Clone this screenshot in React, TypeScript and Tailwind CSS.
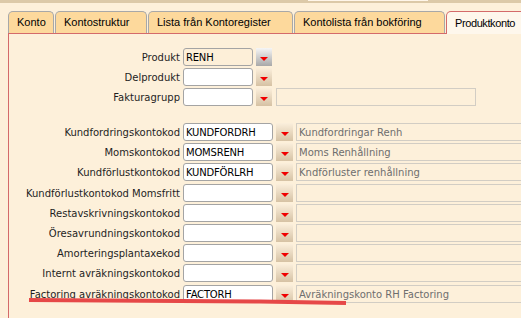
type Row = {
  label: string;
  value?: string;
  desc?: string;
  hasDesc?: boolean;
  extraTop?: boolean;
};

const topRows: Row[] = [
  { label: "Produkt", value: "RENH" },
  { label: "Delprodukt" },
  { label: "Fakturagrupp", hasDesc: true },
];

const kontoRows: Row[] = [
  { label: "Kundfordringskontokod", value: "KUNDFORDRH", desc: "Kundfordringar Renh" },
  { label: "Momskontokod", value: "MOMSRENH", desc: "Moms Renhållning" },
  { label: "Kundförlustkontokod", value: "KUNDFÖRLRH", desc: "Kndförluster renhållning" },
  { label: "Kundförlustkontokod Momsfritt", extraTop: true },
  { label: "Restavskrivningskontokod" },
  { label: "Öresavrundningskontokod" },
  { label: "Amorteringsplantaxekod" },
  { label: "Internt avräkningskontokod" },
  { label: "Factoring avräkningskontokod", value: "FACTORH", desc: "Avräkningskonto RH Factoring", extraTop: true },
];

const tabs = [
  { name: "Konto", w: "w-[46px]" },
  { name: "Kontostruktur", w: "w-[92px]" },
  { name: "Lista från Kontoregister", w: "w-[145px]" },
  { name: "Kontolista från bokföring", w: "w-[151px]" },
];

function DropButton({ gray, wide }: { gray?: boolean; wide?: boolean }) {
  return (
    <div
      className={`${wide ? "w-[17px]" : "w-[16px]"} h-[18px] flex items-center justify-center pt-[3px] ${
        gray
          ? "bg-gradient-to-b from-[#f6f6f6] to-[#a9a9a9]"
          : "bg-gradient-to-b from-[#fbefdc] to-[#d6c2a4]"
      }`}
    >
      <svg width="8" height="4" viewBox="0 0 8 4">
        <polygon points="0,0 8,0 4,4" fill="#f00000" />
      </svg>
    </div>
  );
}

function FieldInput({ value, width, filled }: { value?: string; width: string; filled?: boolean }) {
  return (
    <div
      className={`${width} h-[18px] rounded-[3px] border border-[#a4a4a4] px-[2px] flex items-center text-[10px] text-black tracking-[-0.2px] ${
        filled ? "bg-[#fdefd8]" : "bg-white"
      }`}
    >
      {value}
    </div>
  );
}

export default function App() {
  return (
    <div className="w-[521px] h-[318px] overflow-hidden relative bg-[#fdf0da] font-['DejaVu_Sans',sans-serif]">
      {/* top strip */}
      <div className="h-[3px] bg-[#dcc9a8] flex">
        <div className="ml-[308px] w-[120px] h-[1px] bg-[#fff6ea]" />
      </div>

      {/* tabs */}
      <div className="mt-[8px] pl-[8px] flex items-end h-[22px] font-['Liberation_Sans',sans-serif] text-[11px] text-black">
        {tabs.map((t, i) => (
          <div
            key={t.name}
            className={`${t.w} ${i > 0 ? "ml-[1px]" : ""} shrink-0 h-[22px] rounded-t-[5px] border border-b-0 border-[#a8a8a8] bg-[#fdd99c] pl-[8px] flex items-center whitespace-nowrap`}
          >
            {t.name}
          </div>
        ))}
        <div className="ml-[1px] shrink-0 w-[90px] h-[23px] -mb-[1px] rounded-t-[5px] border border-b-0 border-[#d46a6a] bg-[#fef7ec] pl-[8px] flex items-center relative z-10 whitespace-nowrap tracking-[-0.4px]">
          Produktkonto
        </div>
      </div>

      {/* panel */}
      <div className="ml-[8px] w-[560px] h-[300px] border-l border-t border-[#d46a6a] bg-[#fdf0da] pt-[14px]">
        <div className="flex flex-col gap-[2px]">
          {topRows.map((r, i) => (
            <div key={r.label} className="flex items-center h-[18px]">
              <div className="w-[171px] text-right text-[10px] text-[#1e1e1e] whitespace-nowrap">{r.label}</div>
              <div className="ml-[3px]">
                <FieldInput value={r.value} width="w-[70px]" filled={i === 0} />
              </div>
              <div className="ml-[3px]">
                <DropButton gray={i === 0} />
              </div>
              {r.hasDesc && <div className="ml-[4px] w-[200px] h-[18px] border border-[#d2cdc4]" />}
            </div>
          ))}
        </div>

        <div className="mt-[17px] flex flex-col gap-[2px]">
          {kontoRows.map((r) => (
            <div key={r.label} className={`flex items-center h-[18px] ${r.extraTop ? "mt-[1px]" : ""}`}>
              <div className="w-[171px] text-right text-[10px] text-[#1e1e1e] whitespace-nowrap">{r.label}</div>
              <div className="ml-[3px]">
                <FieldInput value={r.value} width="w-[90px]" />
              </div>
              <div className="ml-[3px]">
                <DropButton wide />
              </div>
              <div className="ml-[3px] w-[240px] h-[18px] border border-[#d2cdc4] pl-[2px] flex items-center text-[10px] text-[#6e6e6e] whitespace-nowrap">
                {r.desc}
              </div>
            </div>
          ))}
        </div>
      </div>

      {/* hand-drawn red underline annotation */}
      <svg className="absolute left-0 top-0 pointer-events-none" width="521" height="318">
        <path d="M29 300 L180 301 L260 301.5 L346 303" stroke="#e64848" strokeWidth="4" fill="none" />
      </svg>
    </div>
  );
}
